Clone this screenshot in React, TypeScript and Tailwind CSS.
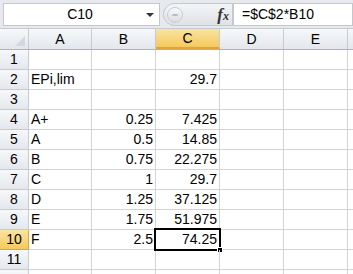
import React from 'react';

const cols = ['A', 'B', 'C', 'D', 'E', ''];
const widths = ['w-[63px]', 'w-[64px]', 'w-[64px]', 'w-[64px]', 'w-[64px]', 'w-[64px]'];

const rows: { a?: string; b?: string; c?: string }[] = [
  {},
  { a: 'EPi,lim', c: '29.7' },
  {},
  { a: 'A+', b: '0.25', c: '7.425' },
  { a: 'A', b: '0.5', c: '14.85' },
  { a: 'B', b: '0.75', c: '22.275' },
  { a: 'C', b: '1', c: '29.7' },
  { a: 'D', b: '1.25', c: '37.125' },
  { a: 'E', b: '1.75', c: '51.975' },
  { a: 'F', b: '2.5', c: '74.25' },
  {},
  {},
];

const App: React.FC = () => {
  return (
    <div className="w-[353px] h-[274px] overflow-hidden bg-white text-[14px] text-black" style={{ fontFamily: '"Liberation Sans", Arial, sans-serif' }}>
      {/* Formula bar */}
      <div className="h-[29px] flex items-center bg-[#e6e9ee] border-b border-[#c6cbd2] pt-[1px]">
        <div className="ml-[3px] h-[23px] w-[157px] bg-white border border-[#c3c8ce] flex items-center">
          <span className="flex-1 text-center pl-[10px]">C10</span>
          <span className="w-0 h-0 border-l-[4px] border-r-[4px] border-t-[4px] border-l-transparent border-r-transparent border-t-[#333] mr-[5px]" />
        </div>
        <div className="ml-[3px] h-[23px] w-[70px] rounded-l-full bg-gradient-to-b from-[#f4f5f7] to-[#dfe2e6] border border-[#c3c8ce] flex items-center pl-[3px]">
          <div className="w-[16px] h-[16px] rounded-full bg-gradient-to-b from-[#fafafa] to-[#d9dce0] border border-[#c7cbd0] flex items-center justify-center">
            <div className="w-[6px] h-[2px] bg-[#b9bec4] rounded" />
          </div>
          <span className="ml-auto mr-[3px] italic font-bold text-[17px] leading-none text-[#333]" style={{ fontFamily: '"Liberation Serif", serif' }}>
            f<span className="text-[12px]">x</span>
          </span>
        </div>
        <div className="h-[23px] flex-1 bg-white border border-[#c3c8ce] flex items-center pl-[8px]">
          =$C$2*B10
        </div>
      </div>

      {/* Column headers */}
      <div className="flex h-[21px] bg-gradient-to-b from-[#f6f8fa] to-[#e3e7ec] border-b border-[#9eb6ce]">
        <div className="w-[29px] shrink-0 border-r border-[#c5cbd3] flex items-end justify-end pr-[3px] pb-[3px]">
          <svg width="10" height="10" viewBox="0 0 10 10">
            <polygon points="10,0 10,10 0,10" fill="#d3d8de" />
          </svg>
        </div>
        {cols.map((c, i) => (
          <div
            key={i}
            className={`${widths[i]} shrink-0 border-r border-[#c5cbd3] flex items-center justify-center ${c === 'C' ? 'bg-gradient-to-b from-[#f9e49f] to-[#f5c95c] border-b-2 border-b-[#e2a33a]' : ''}`}
          >
            {c}
          </div>
        ))}
      </div>

      {/* Rows */}
      {rows.map((r, idx) => {
        const n = idx + 1;
        const sel = n === 10;
        return (
          <div key={n} className="flex h-[20px]">
            <div className={`w-[29px] shrink-0 border-r border-b flex items-center justify-center ${sel ? 'bg-gradient-to-b from-[#f9e49f] to-[#f5c95c] border-[#e2a33a]' : 'bg-gradient-to-b from-[#f6f8fa] to-[#e4e8ed] border-[#c5cbd3]'}`}>
              {n < 12 ? n : ''}
            </div>
            <div className={`${widths[0]} shrink-0 border-r border-b border-[#d4d4d4] flex items-center pl-[2px]`}>{r.a}</div>
            <div className={`${widths[1]} shrink-0 border-r border-b border-[#d4d4d4] flex items-center justify-end pr-[2px]`}>{r.b}</div>
            <div className={`${widths[2]} shrink-0 border-r border-b border-[#d4d4d4] flex items-center justify-end pr-[2px] relative`}>
              {r.c}
              {sel && (
                <>
                  <div className="absolute left-[-2px] top-[-2px] right-[-2px] bottom-[-2px] border-2 border-black pointer-events-none" />
                  <div className="absolute right-[-4px] bottom-[-4px] w-[6px] h-[6px] bg-black border border-white" />
                </>
              )}
            </div>
            <div className={`${widths[3]} shrink-0 border-r border-b border-[#d4d4d4]`} />
            <div className={`${widths[4]} shrink-0 border-r border-b border-[#d4d4d4]`} />
            <div className={`${widths[5]} shrink-0 border-r border-b border-[#d4d4d4]`} />
          </div>
        );
      })}
    </div>
  );
};

export default App;
